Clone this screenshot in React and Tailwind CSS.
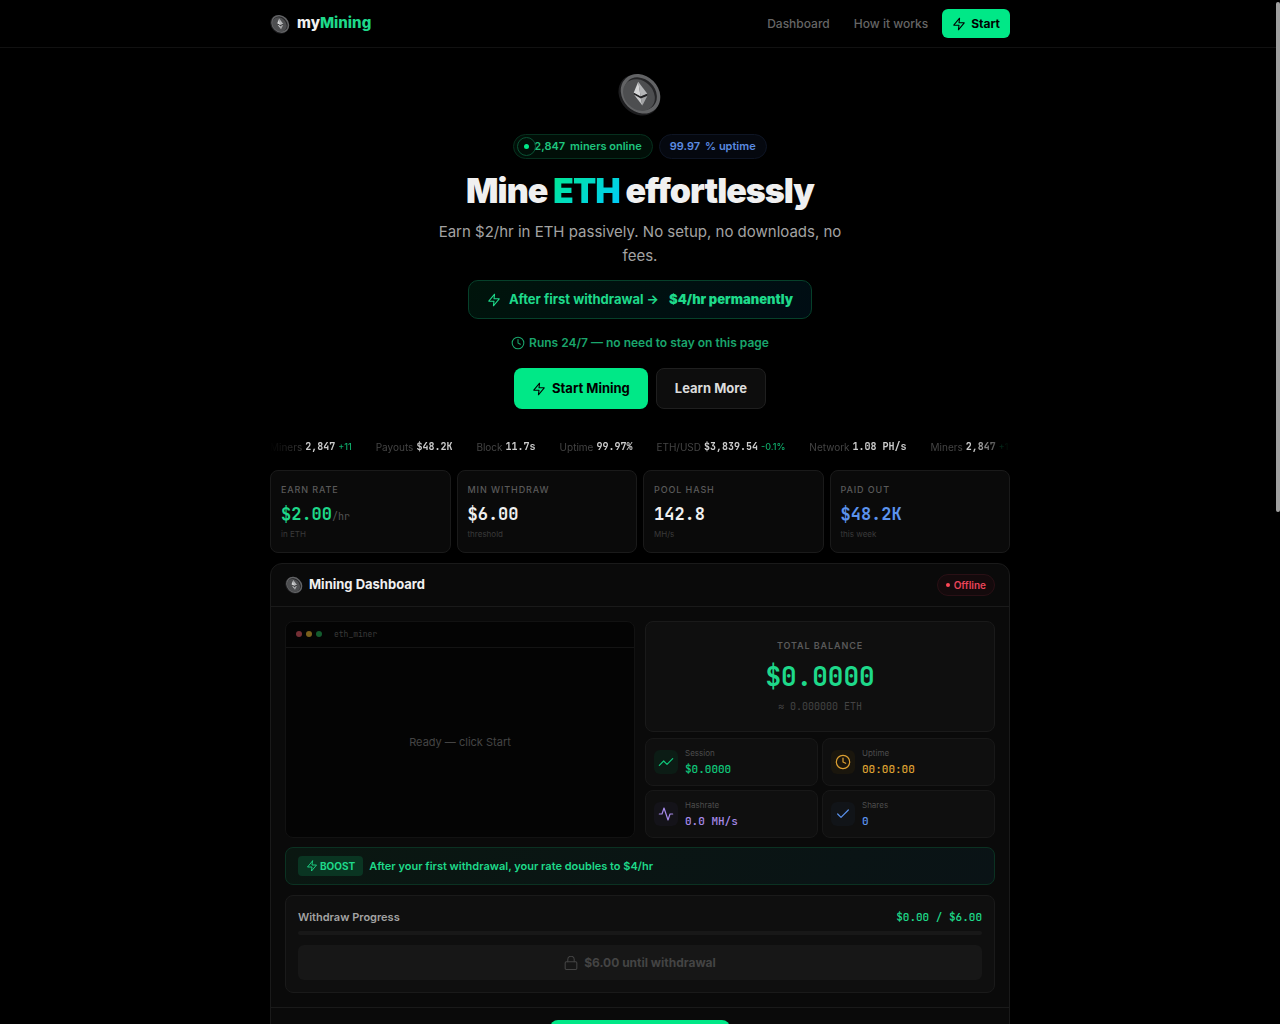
import React, { useState } from 'react';

const MONO = "font-['JetBrains_Mono','DejaVu_Sans_Mono',monospace]";

const tickerItems = [
  { label: 'Miners', value: '2,847', change: '+11' },
  { label: 'Payouts', value: '$48.2K' },
  { label: 'Block', value: '11.7s' },
  { label: 'Uptime', value: '99.97%' },
  { label: 'ETH/USD', value: '$3,839.54', change: '-0.1%' },
  { label: 'Network', value: '1.08 PH/s' },
];

const stats = [
  { label: 'Earn rate', value: '$2.00', unit: '/hr', sub: 'in ETH', color: 'text-[#1ed98a]' },
  { label: 'Min withdraw', value: '$6.00', sub: 'threshold', color: 'text-[#f0f0f0]' },
  { label: 'Pool hash', value: '142.8', sub: 'MH/s', color: 'text-[#f0f0f0]' },
  { label: 'Paid out', value: '$48.2K', sub: 'this week', color: 'text-[#5b93ee]' },
];

const metrics = [
  { icon: 'trend', label: 'Session', value: '$0.0000', color: 'text-[#10c77b]', tint: 'bg-[#0c1c15]' },
  { icon: 'clock', label: 'Uptime', value: '00:00:00', color: 'text-[#dda032]', tint: 'bg-[#1a160d]' },
  { icon: 'activity', label: 'Hashrate', value: '0.0 MH/s', color: 'text-[#a78bea]', tint: 'bg-[#141319]' },
  { icon: 'check', label: 'Shares', value: '0', color: 'text-[#5b93ee]', tint: 'bg-[#111418]' },
];

const icons = {
  zap: <polygon points="13 2 3 14 12 14 11 22 21 10 12 10 13 2" />,
  clock: (
    <>
      <circle cx="12" cy="12" r="10" />
      <polyline points="12 6 12 12 16 14" />
    </>
  ),
  trend: <polyline points="22 7 13.5 15.5 8.5 10.5 2 17" />,
  activity: <polyline points="22 12 18 12 15 21 9 3 6 12 2 12" />,
  check: <polyline points="20 6 9 17 4 12" />,
  lock: (
    <>
      <rect x="2" y="10" width="20" height="13" rx="2" />
      <path d="M6.5 10V6a5.5 5.5 0 0 1 11 0v4" />
    </>
  ),
};

const Icon = ({ name, className }) => (
  <svg
    viewBox="0 0 24 24"
    fill="none"
    stroke="currentColor"
    strokeWidth="1.8"
    strokeLinecap="round"
    strokeLinejoin="round"
    className={`shrink-0 ${className}`}
    aria-hidden="true"
  >
    {icons[name]}
  </svg>
);

// Tilted Ethereum coin
const Coin = ({ className }) => (
  <svg viewBox="2 1 42 42" className={`shrink-0 ${className}`} aria-hidden="true">
    <ellipse cx="22" cy="23" rx="21.2" ry="17.8" transform="rotate(45 22 23)" fill="#1d1d1f" />
    <ellipse cx="23.5" cy="21.8" rx="20.4" ry="17.2" transform="rotate(45 23.5 21.8)" fill="#626365" />
    <ellipse cx="23.6" cy="21.6" rx="17" ry="13.8" transform="rotate(45 23.6 21.6)" fill="#252527" />
    <ellipse cx="22" cy="23" rx="16.6" ry="13.6" transform="rotate(45 22 23)" fill="#4d4e50" />
    <path d="M21.3 10.3 17 20.8l6.6 3.6z" fill="#d4d5d6" />
    <path d="M21.3 10.3 30 21.8l-6.4 2.6z" fill="#b4b5b7" />
    <path d="m17 20.8 6.6 3.6 6.4-2.6-.4 2-5.8 2.4-6.2-3.4z" fill="#222224" />
    <path d="m17.4 22.8 6.4 3.6 1.5 6.5z" fill="#c9cacb" />
    <path d="m30 23.8-6.2 2.6 1.5 6.5z" fill="#a2a3a5" />
  </svg>
);

const Navbar = ({ onStart }) => (
  <header className="sticky top-0 z-10 border-b border-[#111] bg-black">
    <div className="mx-auto flex h-[47px] max-w-[740px] items-center justify-between">
      <a href="#top" className="flex items-center gap-[7px] text-[15px] font-extrabold">
        <Coin className="size-5" />
        <span>
          my<span className="text-[#1ed98a]">Mining</span>
        </span>
      </a>
      <nav className="flex items-center text-xs font-medium text-[#666]">
        <a href="#dashboard" className="mr-6">Dashboard</a>
        <a href="#how" className="mr-3.5">How it works</a>
        <button
          type="button"
          onClick={onStart}
          className="flex h-[29px] items-center gap-[5px] rounded-md bg-[#00e887] px-2.5 font-bold text-black"
        >
          <Icon name="zap" className="size-3.5" />
          Start
        </button>
      </nav>
    </div>
  </header>
);

const Hero = ({ onStart }) => (
  <section id="top" className="flex flex-col items-center pt-6 text-center">
    <Coin className="size-11" />
    <div className="mt-[18px] flex gap-1.5 text-[11px] font-semibold">
      <span className="flex h-[25px] items-center gap-[5px] rounded-full border border-[#06301e] bg-[#010f08] px-2.5 text-[#1ec57e]">
        <span className="relative size-[5px] rounded-full bg-[#00e887]">
          <span className="absolute -inset-[7px] rounded-full border border-[#0a5335]" />
        </span>
        <span>2,847</span>
        <span>miners online</span>
      </span>
      <span className="flex h-[25px] items-center gap-[5px] rounded-full border border-[#0e1524] bg-[#05080f] px-2.5 text-[#5b8be0]">
        <span>99.97</span>
        <span>% uptime</span>
      </span>
    </div>
    <h1 className="mt-3 text-[34px] leading-10 font-black tracking-[-0.03em] text-[#f0f0f0]">
      Mine{' '}
      <span className="bg-linear-135 from-[#00e887] to-[#00c8ff] bg-clip-text text-transparent">ETH</span>{' '}
      effortlessly
    </h1>
    <p className="mt-[9px] max-w-[420px] text-[15px] leading-6 text-[#a3a3a3]">
      Earn $2/hr in ETH passively. No setup, no downloads, no fees.
    </p>
    <div className="mt-3 flex h-[39px] items-center rounded-[10px] border border-[#06402a] bg-linear-135 from-[#00140b] to-[#000d14] px-[18px] text-[13px] font-bold text-[#1ed98a]">
      <Icon name="zap" className="mr-2 size-3.5" />
      <span className="mr-2.5">After first withdrawal →</span>
      <strong className="font-black">$4/hr permanently</strong>
    </div>
    <p className="mt-[15px] flex items-center gap-1 text-xs leading-[18px] font-semibold text-[#1aa56c]">
      <Icon name="clock" className="size-3.5" />
      Runs 24/7 — no need to stay on this page
    </p>
    <div className="mt-4 flex gap-2 text-[13px]">
      <button
        type="button"
        onClick={onStart}
        className="flex h-[41px] items-center gap-1.5 rounded-lg bg-[#00e887] px-[18px] font-bold text-black"
      >
        <Icon name="zap" className="size-3.5" />
        Start Mining
      </button>
      <a
        href="#how"
        className="flex h-[41px] items-center rounded-lg border border-[#1f1f1f] bg-[#0d0d0d] px-[18px] font-bold text-[#dcdcdc]"
      >
        Learn More
      </a>
    </div>
  </section>
);

const Ticker = () => (
  <div className="mt-[30px] overflow-hidden mask-[linear-gradient(90deg,transparent,#000_5%,#000_95%,transparent)]">
    <div className="flex gap-6 text-[10px] leading-4 whitespace-nowrap">
      {[...tickerItems, tickerItems[0]].map((item, i) => (
        <span key={i} className="flex gap-[3px] text-[#444]">
          <span>{item.label}</span>
          <span className={`${MONO} font-bold text-[#ccc]`}>{item.value}</span>
          {item.change && <span className="text-[9px] font-medium text-[#0fa868]">{item.change}</span>}
        </span>
      ))}
    </div>
  </div>
);

const StatCard = ({ stat }) => (
  <div className="rounded-lg border border-[#1a1a1a] bg-[#0a0a0a] px-2.5 py-3">
    <div className="text-[9px] leading-[14px] font-medium tracking-widest text-[#5a5a5a] uppercase">{stat.label}</div>
    <div className={`${MONO} mt-1.5 text-[17px] leading-[22px] font-semibold ${stat.color}`}>
      {stat.value}
      {stat.unit && <span className="text-[10px] leading-none font-normal text-[#555]">{stat.unit}</span>}
    </div>
    <div className="mt-[3px] text-[8px] leading-3 text-[#3a3a3a]">{stat.sub}</div>
  </div>
);

const Terminal = () => (
  <div className="flex flex-col overflow-hidden rounded-lg border border-[#121212] bg-[#040404]">
    <div className="flex h-[26px] items-center gap-1 border-b border-[#141414] px-2.5 pb-0.5">
      <span className="size-1.5 rounded-full bg-[#742f35]" />
      <span className="size-1.5 rounded-full bg-[#7b601c]" />
      <span className="size-1.5 rounded-full bg-[#135c2e]" />
      <span className={`${MONO} ml-2 text-[8px] text-[#3a3a3a]`}>eth_miner</span>
    </div>
    <div className="flex flex-1 items-center justify-center text-[11px] text-[#444]">Ready — click Start</div>
  </div>
);

const Metric = ({ metric }) => (
  <div className="flex h-12 items-center gap-[7px] rounded-lg border border-[#181818] bg-[#0f0f0f] px-2">
    <span className={`flex size-6 items-center justify-center rounded-md ${metric.tint} ${metric.color}`}>
      <Icon name={metric.icon} className="size-4" />
    </span>
    <div>
      <div className="text-[8px] leading-3 text-[#4d4d4d]">{metric.label}</div>
      <div className={`${MONO} mt-0.5 text-[11px] leading-4 font-medium ${metric.color}`}>{metric.value}</div>
    </div>
  </div>
);

const Dashboard = ({ onStart }) => (
  <section id="dashboard" className="mt-2.5 rounded-xl border border-[#1a1a1a] bg-[#0a0a0a]">
    <div className="flex h-[43px] items-center justify-between border-b border-[#1a1a1a] px-3.5">
      <h2 className="flex items-center gap-1.5 text-[13px] font-bold text-[#f0f0f0]">
        <Coin className="size-[18px]" />
        Mining Dashboard
      </h2>
      <span className="flex h-[22px] items-center gap-1 rounded-full border border-[#2a1015] bg-[#140a0c] px-2 text-[10px] font-semibold text-[#ea4459]">
        <span className="size-1 rounded-full bg-[#ff4757]" />
        Offline
      </span>
    </div>

    <div className="p-3.5">
      <div className="grid grid-cols-2 gap-2.5">
        <Terminal />
        <div>
          <div className="flex h-[111px] flex-col items-center rounded-lg border border-[#1a1a1a] bg-[#0f0f0f] pt-[17px]">
            <div className="text-[9px] leading-[14px] font-semibold tracking-widest text-[#5a5a5a] uppercase">
              Total balance
            </div>
            <div className={`${MONO} mt-2 text-[26px] leading-8 font-semibold text-[#1ed98a]`}>$0.0000</div>
            <div className={`${MONO} mt-1.5 text-[10px] leading-4 text-[#444]`}>≈ 0.000000 ETH</div>
          </div>
          <div className="mt-1.5 grid grid-cols-2 gap-1">
            {metrics.map((metric) => (
              <Metric key={metric.label} metric={metric} />
            ))}
          </div>
        </div>
      </div>

      <div className="mt-[9px] flex h-[38px] items-center gap-1.5 rounded-lg border border-[#0b3222] bg-linear-135 from-[#0a1711] to-[#0a1316] px-3 text-[11px] font-semibold text-[#1ed98a]">
        <span className="flex h-5 items-center gap-0.5 rounded bg-[#0a3522] px-2 text-[10px] font-bold">
          <Icon name="zap" className="size-3" />
          BOOST
        </span>
        After your first withdrawal, your rate doubles to $4/hr
      </div>

      <div className="mt-2.5 rounded-lg border border-[#1a1a1a] bg-[#0f0f0f] p-3">
        <div className="flex items-center justify-between text-[11px] leading-[18px]">
          <span className="font-semibold text-[#a3a3a3]">Withdraw Progress</span>
          <span className={`${MONO} font-medium text-[#1ed98a]`}>$0.00 / $6.00</span>
        </div>
        <div className="mt-[5px] h-1 rounded-full bg-[#181818]" role="progressbar" aria-valuenow={0} aria-label="Withdraw Progress" />
        <button
          type="button"
          disabled
          className="mt-2.5 flex h-[35px] w-full items-center justify-center gap-1.5 rounded-md bg-[#171717] text-xs font-bold text-[#444]"
        >
          <Icon name="lock" className="size-3.5" />
          $6.00 until withdrawal
        </button>
      </div>
    </div>

    <div className="flex justify-center border-t border-[#1a1a1a] p-3">
      <button
        type="button"
        onClick={onStart}
        aria-label="Start Mining"
        className="h-10 w-[180px] rounded-lg bg-[#00e887]"
      />
    </div>
  </section>
);

const App = () => {
  const [, setRunning] = useState(false);
  const start = () => setRunning(true);

  return (
    <div className="h-screen overflow-y-auto bg-black font-['Inter',sans-serif] text-[#f0f0f0] [scrollbar-width:none]">
      <Navbar onStart={start} />
      <main className="mx-auto max-w-[740px]">
        <Hero onStart={start} />
        <Ticker />
        <div className="mt-[15px] grid grid-cols-4 gap-1.5">
          {stats.map((stat) => (
            <StatCard key={stat.label} stat={stat} />
          ))}
        </div>
        <Dashboard onStart={start} />
      </main>
      {/* Overlay scroll thumb */}
      <div className="fixed top-0.5 right-0 z-20 h-[510px] w-1 rounded-full bg-[#a0a0a0]" />
    </div>
  );
};

export default App;
